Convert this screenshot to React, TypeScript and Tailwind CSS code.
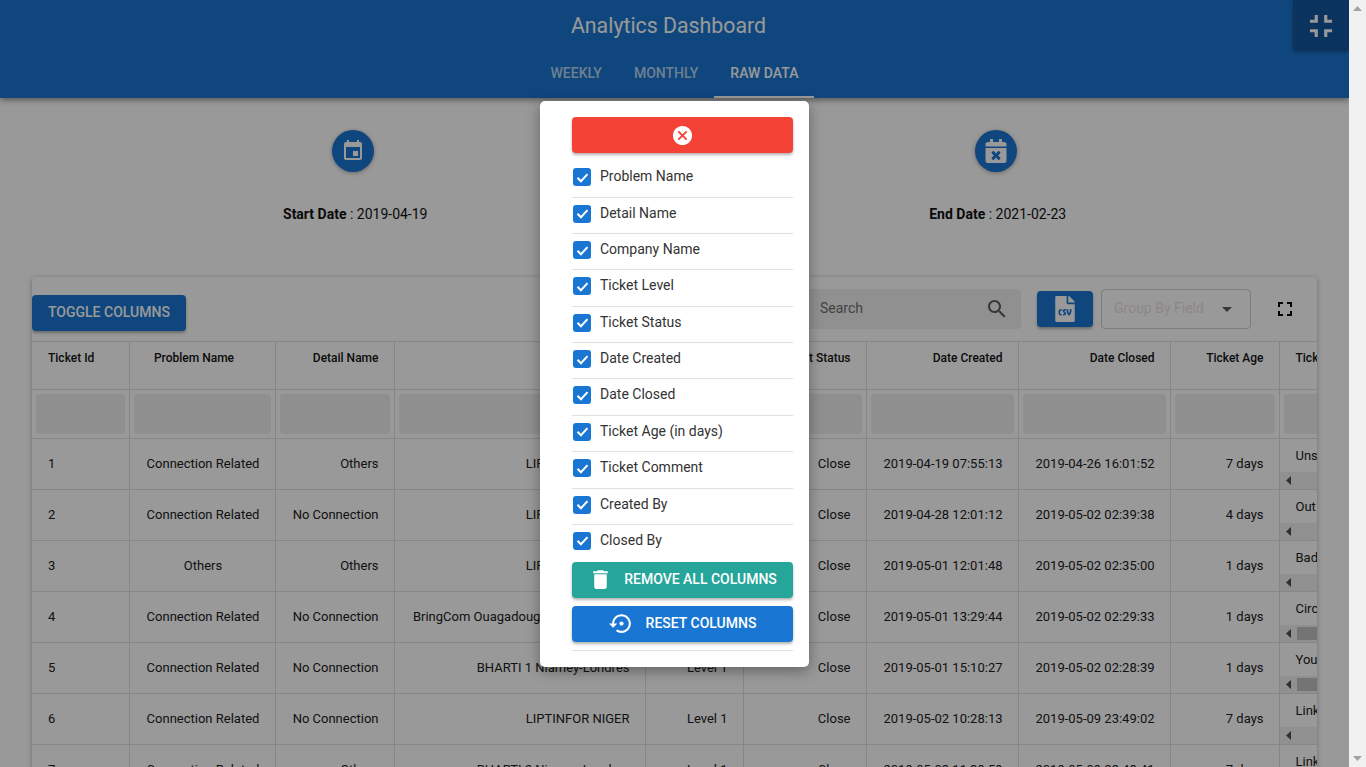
import { FaCalendarTimes, FaFileCsv } from "react-icons/fa";

const columnNames = [
  "Problem Name",
  "Detail Name",
  "Company Name",
  "Ticket Level",
  "Ticket Status",
  "Date Created",
  "Date Closed",
  "Ticket Age (in days)",
  "Ticket Comment",
  "Created By",
  "Closed By",
];

const colWidths = [
  "w-[97px]",
  "w-[146px]",
  "w-[119px]",
  "w-[251px]",
  "w-[98px]",
  "w-[123px]",
  "w-[152px]",
  "w-[152px]",
  "w-[109px]",
  "w-[300px]",
];

const rows = [
  { id: 1, problem: "Connection Related", detail: "Others", company: "LIPTINFOR NIGER", created: "2019-04-19 07:55:13", closed: "2019-04-26 16:01:52", age: "7 days", comment: "Unstable", thumb: false },
  { id: 2, problem: "Connection Related", detail: "No Connection", company: "LIPTINFOR NIGER", created: "2019-04-28 12:01:12", closed: "2019-05-02 02:39:38", age: "4 days", comment: "Out of service", thumb: false },
  { id: 3, problem: "Others", detail: "Others", company: "LIPTINFOR NIGER", created: "2019-05-01 12:01:48", closed: "2019-05-02 02:35:00", age: "1 days", comment: "Bad link", thumb: false },
  { id: 4, problem: "Connection Related", detail: "No Connection", company: "BringCom Ouagadougou-Niamey-Dori", created: "2019-05-01 13:29:44", closed: "2019-05-02 02:29:33", age: "1 days", comment: "Circuit", thumb: true },
  { id: 5, problem: "Connection Related", detail: "No Connection", company: "BHARTI 1 Niamey-Londres", created: "2019-05-01 15:10:27", closed: "2019-05-02 02:28:39", age: "1 days", comment: "Your link", thumb: true },
  { id: 6, problem: "Connection Related", detail: "No Connection", company: "LIPTINFOR NIGER", created: "2019-05-02 10:28:13", closed: "2019-05-09 23:49:02", age: "7 days", comment: "Link", thumb: false },
  { id: 7, problem: "Connection Related", detail: "Others", company: "BHARTI 2 Niamey-Londres", created: "2019-05-03 11:39:59", closed: "2019-05-09 23:48:41", age: "7 days", comment: "Link", thumb: false },
];

function Icon({ d, size, className }: { d: string; size: number; className?: string }) {
  return (
    <svg width={size} height={size} viewBox="0 0 24 24" fill="currentColor" className={className}>
      <path d={d} />
    </svg>
  );
}

const headCell = "border-r border-[#e0e0e0] pt-[8px] align-top text-xs font-medium text-[#141414]";
const bodyCell = "border-r border-[#e0e0e0] align-middle text-[13px] text-[#212121]";

export default function App() {
  return (
    <div className="flex h-screen overflow-hidden bg-white font-[Roboto,sans-serif]">
      <div className="relative min-w-0 flex-1 overflow-hidden">
        {/* header */}
        <header className="relative z-10 h-[98px] bg-[#1976d2] text-white shadow-[0_2px_6px_rgba(0,0,0,0.45)]">
          <div className="flex h-[50px] items-center justify-center pr-3 pt-px text-[21.3px]">Analytics Dashboard</div>
          <nav className="flex h-[48px] justify-center text-sm font-medium">
            <div className="flex items-center px-4 pb-[2px] text-white/70">WEEKLY</div>
            <div className="flex items-center px-4 pb-[2px] text-white/70">MONTHLY</div>
            <div className="flex items-center border-b-2 border-white px-4">RAW DATA</div>
          </nav>
          <div className="absolute right-0 top-0 flex h-[51px] w-[56px] items-center justify-center rounded-b bg-[#12569f] shadow-[0_1px_4px_rgba(0,0,0,0.3)]">
            <Icon size={38} d="M5 16h3v3h2v-5H5v2zm3-8H5v2h5V5H8v3zm6 11h2v-3h3v-2h-5v5zm2-11V5h-2v5h5V8h-3z" />
          </div>
        </header>

        {/* dates */}
        <section className="grid h-[179px] grid-cols-2 px-8 pt-8 text-sm text-[#111]">
          <div className="flex flex-col items-center">
            <div className="flex h-[42px] w-[42px] items-center justify-center rounded-full bg-[#1976d2] text-white shadow-[0_1px_4px_rgba(0,0,0,0.35)]">
              <Icon size={24} d="M17 12h-5v5h5v-5zM16 1v2H8V1H6v2H5c-1.11 0-1.99.9-1.99 2L3 19c0 1.1.89 2 2 2h14c1.1 0 2-.9 2-2V5c0-1.1-.9-2-2-2h-1V1h-2zm3 18H5V8h14v11z" />
            </div>
            <p className="mt-8 pl-1"><span className="font-bold">Start Date</span> : 2019-04-19</p>
          </div>
          <div className="flex flex-col items-center">
            <div className="flex h-[42px] w-[42px] items-center justify-center rounded-full bg-[#1976d2] text-white shadow-[0_1px_4px_rgba(0,0,0,0.35)]">
              <FaCalendarTimes size={24} />
            </div>
            <p className="mt-8 pl-1"><span className="font-bold">End Date</span> : 2021-02-23</p>
          </div>
        </section>

        {/* table panel */}
        <section className="mx-8 overflow-hidden rounded-t bg-white shadow-[0_1px_5px_rgba(0,0,0,0.3)]">
          <div className="flex h-[64px] items-center">
            <button className="mt-[8px] h-9 rounded bg-[#1976d2] px-4 pb-[2px] text-sm font-medium text-white shadow-[0_2px_3px_rgba(0,0,0,0.3)]">
              TOGGLE COLUMNS
            </button>
            <div className="ml-auto flex items-center pr-2">
              <div className="flex h-10 w-[260px] items-center justify-end rounded bg-[#f0f0f0] pr-3">
                <span className="mr-auto pb-[2px] pl-[59px] text-sm text-[#6f6f6f]">Search</span>
                <Icon size={24} d="M15.5 14h-.79l-.28-.27C15.41 12.59 16 11.11 16 9.5 16 5.91 13.09 3 9.5 3S3 5.91 3 9.5 5.91 16 9.5 16c1.61 0 3.09-.59 4.23-1.57l.27.28v.79l5 4.99L20.49 19l-4.99-5zm-6 0C7.01 14 5 11.99 5 9.5S7.01 5 9.5 5 14 7.01 14 9.5 11.99 14 9.5 14z" className="text-[#5c5c5c]" />
              </div>
              <div className="ml-4 flex h-9 w-14 items-center justify-center rounded bg-[#1976d2] text-white shadow-[0_2px_3px_rgba(0,0,0,0.3)]">
                <FaFileCsv size={26} />
              </div>
              <div className="ml-2 flex h-10 w-[150px] items-center rounded border border-[#d0d0d0] pl-3 pr-[18px] text-sm text-[#eae2e2]">
                <span className="pb-[2px]">Group By Field</span>
                <svg width="10" height="5" viewBox="0 0 10 5" fill="#5c5c5c" className="ml-auto">
                  <path d="M0 0l5 5 5-5z" />
                </svg>
              </div>
              <div className="ml-[10px] flex h-12 w-12 items-center justify-center text-black">
                <Icon size={24} d="M7 14H5v5h5v-2H7v-3zm-2-4h2V7h3V5H5v5zm12 7h-3v2h5v-5h-2v3zM14 5v2h3v3h2V5h-5z" />
              </div>
            </div>
          </div>

          <table className="w-[1547px] table-fixed border-collapse">
            <colgroup>
              {colWidths.map((w, i) => (
                <col key={i} className={w} />
              ))}
            </colgroup>
            <thead>
              <tr className="h-[48px] border-y border-[#e0e0e0]">
                <th className={`${headCell} pl-4 text-left`}>Ticket Id</th>
                <th className={`${headCell} pr-4 text-center`}>Problem Name</th>
                <th className={`${headCell} pr-[15px] text-right`}>Detail Name</th>
                <th className={`${headCell} pr-[15px] text-right`}>Company Name</th>
                <th className={`${headCell} pr-[15px] text-right`}>Ticket Level</th>
                <th className={`${headCell} pr-[15px] text-right`}>Ticket Status</th>
                <th className={`${headCell} pr-[15px] text-right`}>Date Created</th>
                <th className={`${headCell} pr-[15px] text-right`}>Date Closed</th>
                <th className={`${headCell} pr-[15px] text-right`}>Ticket Age</th>
                <th className={`${headCell} pl-4 text-left`}>Ticket Comment</th>
              </tr>
              <tr className="h-[48px] border-b border-[#e0e0e0]">
                {colWidths.map((_, i) => (
                  <th key={i} className="border-r border-[#e0e0e0] p-1">
                    <div className="h-10 rounded-sm bg-[#efefef]" />
                  </th>
                ))}
              </tr>
            </thead>
            <tbody>
              {rows.map((r) => (
                <tr key={r.id} className="h-[51px] border-b border-[#e0e0e0]">
                  <td className={`${bodyCell} pl-4 text-left`}>{r.id}</td>
                  <td className={`${bodyCell} pl-[2px] text-center`}>{r.problem}</td>
                  <td className={`${bodyCell} pr-[15px] text-right`}>{r.detail}</td>
                  <td className={`${bodyCell} whitespace-nowrap pr-[15px] text-right`}>{r.company}</td>
                  <td className={`${bodyCell} pr-[15px] text-right`}>Level 1</td>
                  <td className={`${bodyCell} pr-[15px] text-right`}>Close</td>
                  <td className={`${bodyCell} pr-[15px] text-right`}>{r.created}</td>
                  <td className={`${bodyCell} pr-[15px] text-right`}>{r.closed}</td>
                  <td className={`${bodyCell} pr-[15px] text-right`}>{r.age}</td>
                  <td className={`${bodyCell} p-0`}>
                    <div className="flex h-[50px] flex-col justify-between">
                      <div className="pl-4 pt-[7px]">{r.comment}</div>
                      <div className="flex h-[17px] items-center bg-[#f1f1f1]">
                        <svg width="5" height="9" viewBox="0 0 5 9" fill="#505050" className="ml-[6px]">
                          <path d="M5 0v9L0 4.500z" />
                        </svg>
                        {r.thumb && <div className="ml-[6px] h-[13px] w-[120px] bg-[#c1c1c1]" />}
                      </div>
                    </div>
                  </td>
                </tr>
              ))}
            </tbody>
          </table>
        </section>

        {/* dim layer */}
        <div className="absolute inset-0 z-20 bg-black/40" />

        {/* toggle columns popup */}
        <div className="absolute left-[540px] top-[101px] z-30 w-[269px] rounded-[5px] bg-white pb-4 pl-8 pr-4 pt-4 shadow-[0_4px_14px_rgba(0,0,0,0.35)]">
          <button className="flex h-9 w-full items-center justify-center rounded bg-[#f44336] text-white shadow-[0_2px_3px_rgba(0,0,0,0.3)]">
            <Icon size={23} d="M12 2C6.470 2 2 6.470 2 12s4.470 10 10 10 10-4.470 10-10S17.530 2 12 2zm5 13.590L15.590 17 12 13.410 8.410 17 7 15.590 10.590 12 7 8.410 8.410 7 12 10.590 15.590 7 17 8.410 13.410 12 17 15.590z" />
          </button>
          <ul className="mt-[8.3px]">
            {columnNames.map((name, i) => (
              <li
                key={name}
                className={`flex h-[36.36px] items-start gap-[9px] pl-px pt-[7px] text-sm text-[#333] ${i < columnNames.length - 1 ? "border-b border-[#e0e0e0]" : ""}`}
              >
                <span className="flex h-[18px] w-[18px] items-center justify-center rounded-[3px] bg-[#1976d2]">
                  <svg width="15" height="15" viewBox="0 0 24 24" fill="none" stroke="white" strokeWidth="3.200">
                    <path d="M4 12.500l5.500 5.500L20 6.500" />
                  </svg>
                </span>
                <span className="leading-4">{name}</span>
              </li>
            ))}
          </ul>
          <button className="mt-[0.7px] flex h-9 w-full items-center justify-center gap-[11px] rounded bg-[#26a69a] text-sm font-medium text-white shadow-[0_2px_3px_rgba(0,0,0,0.3)]">
            <Icon size={25} d="M6 19c0 1.100.9 2 2 2h8c1.100 0 2-.9 2-2V7H6v12zM19 4h-3.500l-1-1h-5l-1 1H5v2h14V4z" />
            <span className="pb-px">REMOVE ALL COLUMNS</span>
          </button>
          <button className="mt-2 flex h-9 w-full items-center justify-center gap-3 rounded bg-[#1976d2] text-sm font-medium text-white shadow-[0_2px_3px_rgba(0,0,0,0.3)]">
            <Icon size={25} d="M14 12c0-1.100-.9-2-2-2s-2 .9-2 2 .9 2 2 2 2-.9 2-2zm-2-9c-4.970 0-9 4.030-9 9H0l4 4 4-4H5c0-3.870 3.130-7 7-7s7 3.130 7 7-3.130 7-7 7c-1.510 0-2.910-.49-4.060-1.300l-1.420 1.440C8.040 20.300 9.940 21 12 21c4.970 0 9-4.030 9-9s-4.030-9-9-9z" />
            <span className="pb-px">RESET COLUMNS</span>
          </button>
          <div className="mt-2 border-b border-[#e0e0e0]" />
        </div>
      </div>

      {/* page scrollbar */}
      <div className="flex w-[17px] shrink-0 flex-col items-center justify-between bg-[#f1f1f1] py-[6px]">
        <svg width="9" height="5" viewBox="0 0 9 5" fill="#a3a3a3">
          <path d="M4.500 0L9 5H0z" />
        </svg>
        <svg width="9" height="5" viewBox="0 0 9 5" fill="#a3a3a3">
          <path d="M0 0h9L4.500 5z" />
        </svg>
      </div>
    </div>
  );
}
